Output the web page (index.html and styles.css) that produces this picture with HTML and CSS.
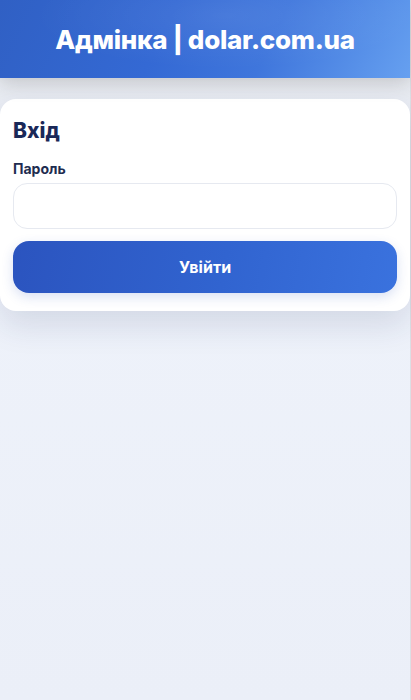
FILE: index.html
```html
<!DOCTYPE html>
<html lang="uk">
<head>
  <meta charset="UTF-8">
  <title>Адмінка | dolar.com.ua</title>
  <link rel="stylesheet" href="styles.css">
</head>
<body>
  <div class="page">
    <header class="topbar">
      <h1>Адмінка | dolar.com.ua</h1>
    </header>

    <main class="content">
      <form class="card" onsubmit="return false;">
        <h2>Вхід</h2>
        <label for="password">Пароль</label>
        <input type="password" id="password">
        <button type="submit">Увійти</button>
      </form>
    </main>
  </div>
</body>
</html>
```

FILE: styles.css
```css
html {
  background-color: #dcdfe4;
}

body {
  margin: 0;
  font-family: 'Inter', 'Noto Sans', sans-serif;
  color: #1b2a55;
}

.page {
  width: 410px;
  min-height: 100vh;
  background: linear-gradient(180deg, #e6e9ef 0%, #eef2fa 40%, #ebeff8 100%);
}

.topbar {
  height: 78px;
  display: flex;
  align-items: center;
  justify-content: center;
  background:
    radial-gradient(ellipse at 55% 20%, rgba(255, 255, 255, 0.08), rgba(255, 255, 255, 0) 60%),
    linear-gradient(115deg, #3060c4 0%, #3469d4 40%, #3f76dc 65%, #66a0f0 100%);
  box-shadow: 0 5px 18px rgba(50, 45, 40, 0.2);
  position: relative;
}

.topbar h1 {
  margin: 0;
  color: #fff;
  font-size: 26px;
  font-weight: 800;
  letter-spacing: -0.3px;
}

.content {
  padding-top: 21px;
}

.card {
  display: flex;
  flex-direction: column;
  background-color: #fff;
  border-radius: 16px;
  padding: 19px 13px 18px;
  box-shadow: 0 14px 32px rgba(30, 50, 90, 0.13);
}

.card h2 {
  margin: 0 0 17px;
  font-size: 21px;
  font-weight: 800;
  color: #1a2858;
}

label {
  font-size: 14px;
  font-weight: 700;
  color: #1e2c50;
  margin-bottom: 6px;
}

input {
  height: 46px;
  box-sizing: border-box;
  border: 1px solid #e6e9f0;
  border-radius: 14px;
  padding: 0 14px;
  font-size: 16px;
  margin-bottom: 12px;
  background-color: #fff;
}

input:focus {
  outline: none;
  border-color: #9bb4e8;
}

button {
  height: 52px;
  border: none;
  border-radius: 16px;
  background: linear-gradient(100deg, #2b54bf 0%, #3164d0 55%, #3a72de 100%);
  color: #fff;
  font-family: inherit;
  font-size: 16px;
  font-weight: 700;
  cursor: pointer;
  box-shadow: 0 4px 12px rgba(43, 84, 191, 0.18);
}

button:hover {
  background: linear-gradient(100deg, #2749ad 0%, #2f5ec4 100%);
}
```
